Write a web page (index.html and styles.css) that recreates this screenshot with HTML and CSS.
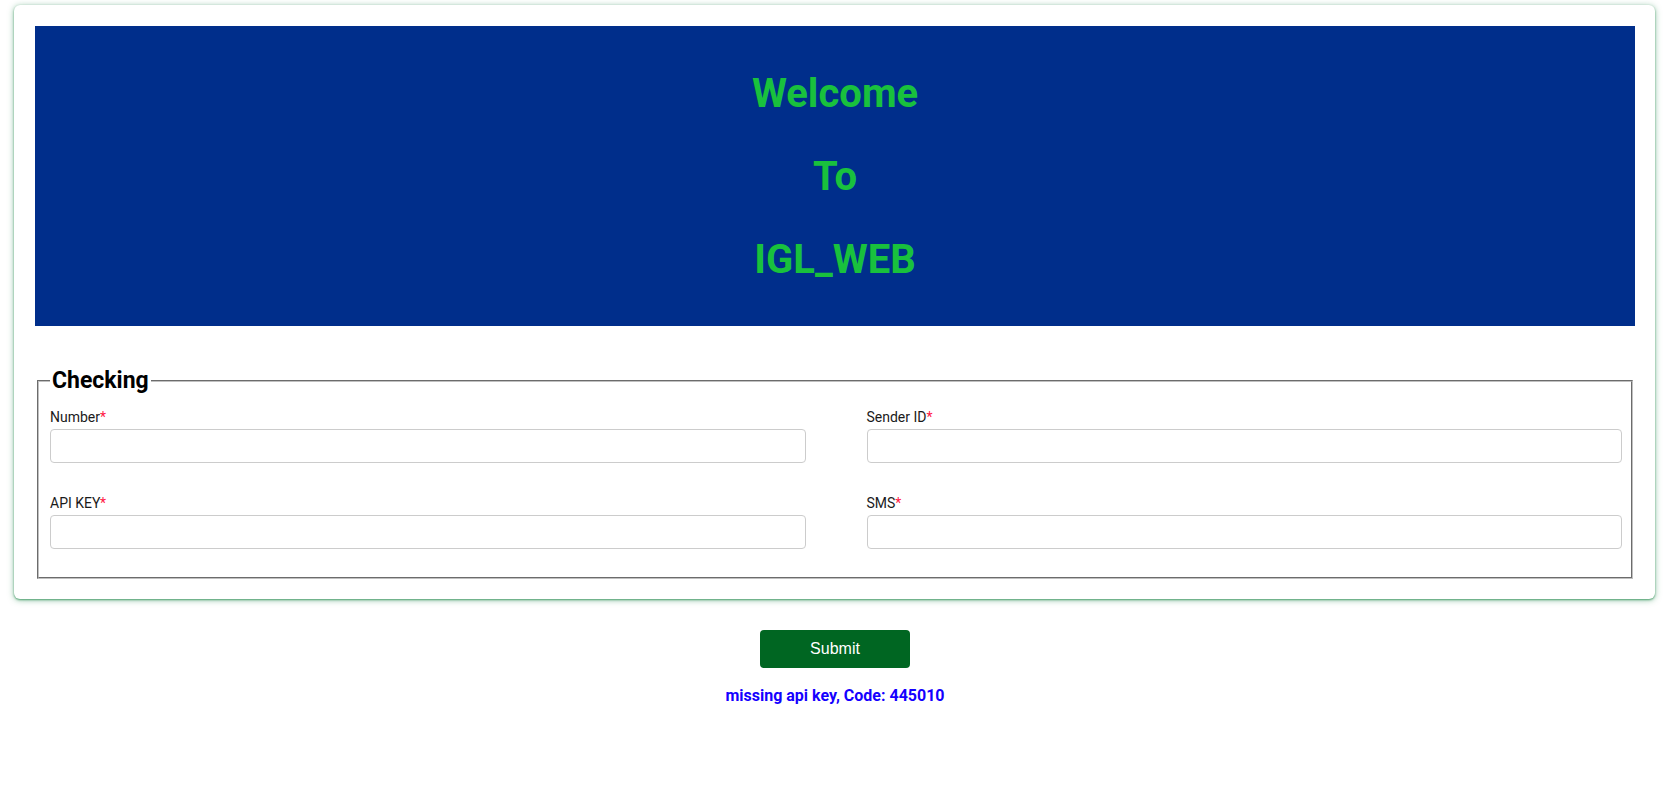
FILE: index.html
```html
<!DOCTYPE html>
<html lang="en">
<head>
<meta charset="utf-8">
<title>IGL_WEB</title>
<link rel="stylesheet" href="styles.css">
</head>
<body>
<div class="card">
  <div class="banner">
    <div class="banner-line">Welcome</div>
    <div class="banner-line">To</div>
    <div class="banner-line">IGL_WEB</div>
  </div>
  <fieldset class="group">
    <legend class="group-title">Checking</legend>
    <div class="fields">
      <div class="field">
        <label class="field-label">Number<span class="req">*</span></label>
        <input class="field-input" type="text">
      </div>
      <div class="field">
        <label class="field-label">Sender ID<span class="req">*</span></label>
        <input class="field-input" type="text">
      </div>
      <div class="field">
        <label class="field-label">API KEY<span class="req">*</span></label>
        <input class="field-input" type="text">
      </div>
      <div class="field">
        <label class="field-label">SMS<span class="req">*</span></label>
        <input class="field-input" type="text">
      </div>
    </div>
  </fieldset>
</div>
<div class="actions">
  <button class="submit" type="button">Submit</button>
  <div class="message">missing api key, Code: 445010</div>
</div>
</body>
</html>
```
FILE: styles.css
```css
html, body {
  margin: 0;
  padding: 0;
  background: #ffffff;
}
body {
  font-family: Roboto, "Liberation Sans", Arial, sans-serif;
  color: #111;
}
.card {
  margin: 5px 13px 0 14px;
  padding: 21px 20px 20px 21px;
  background: #fff;
  border-radius: 6px;
  box-shadow: 0 1px 2px rgba(40, 140, 80, 0.7), 0 1px 6px rgba(40, 140, 80, 0.5);
}
.banner {
  background: #002e8b;
  padding: 26px 0 25px;
  display: flex;
  flex-direction: column;
  align-items: center;
}
.banner-line {
  color: #19c13d;
  font-weight: 700;
  font-size: 40px;
  line-height: 83px;
}
.group {
  margin: 42px 2px 0 2px;
  padding: 0 9px 28px 11px;
  border: 2px groove #c0c0c0;
}
.group-title {
  font-size: 23px;
  font-weight: 700;
  color: #000;
  padding: 0 2px;
  margin-left: 0;
  line-height: 26px;
}
.fields {
  display: grid;
  grid-template-columns: 1fr 1fr;
  column-gap: 61px;
  row-gap: 32px;
  padding-top: 15px;
}
.field {
  display: flex;
  flex-direction: column;
  gap: 4px;
}
.field-label {
  font-size: 14px;
  line-height: 16px;
  color: #1a1a1a;
}
.req {
  color: #ff1744;
}
.field-input {
  box-sizing: border-box;
  height: 34px;
  margin: 0;
  border: 1px solid #cccccc;
  border-radius: 4px;
  background: #fff;
  font-size: 14px;
  padding: 0 8px;
}
.actions {
  display: flex;
  flex-direction: column;
  align-items: center;
  padding: 31px 0 0 2px;
}
.submit {
  width: 150px;
  height: 38px;
  border: none;
  border-radius: 4px;
  background: #006622;
  color: #fff;
  font-family: "Liberation Sans", Arial, sans-serif;
  font-size: 16px;
}
.message {
  margin-top: 18px;
  color: #1400ff;
  font-weight: 700;
  font-size: 16px;
  line-height: 19px;
}
```
